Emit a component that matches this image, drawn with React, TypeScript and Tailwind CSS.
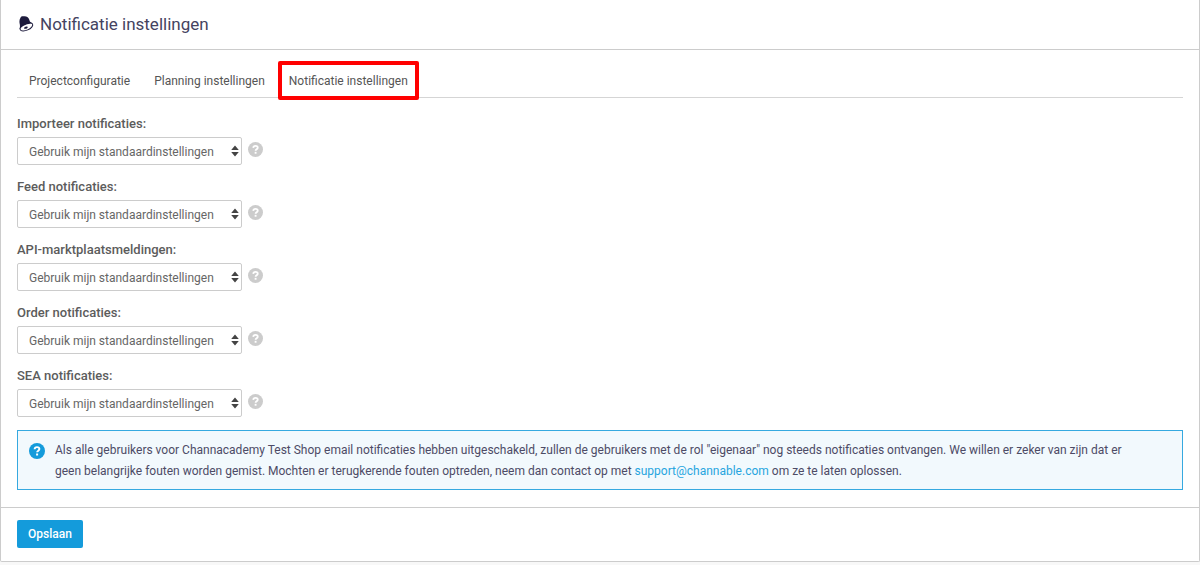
import { useState } from 'react'

const TABS = ['Projectconfiguratie', 'Planning instellingen', 'Notificatie instellingen']

const FIELDS = [
  { id: 'import', label: 'Importeer notificaties:' },
  { id: 'feed', label: 'Feed notificaties:' },
  { id: 'api', label: 'API-marktplaatsmeldingen:' },
  { id: 'order', label: 'Order notificaties:' },
  { id: 'sea', label: 'SEA notificaties:' },
]

function BellIcon() {
  return (
    <svg className="w-4 h-4" viewBox="0 0 16 16" fill="none" aria-hidden="true">
      <path
        d="M2.6 1.4C3.4.2 4.4.1 5.2.3C8.4-.3 10.8 1.4 11.4 4C11.8 5.8 12.6 6.6 14.6 7.4C10.6 7.2 4.4 9.4 1.4 13C2.2 11 2 9.8 1.8 8.2C1.2 5.8 1.2 3.4 2.6 1.4Z"
        fill="#1d1b3d"
      />
      <ellipse cx="8.4" cy="10.9" rx="6.8" ry="3.3" transform="rotate(-24 8.4 10.9)" stroke="#1d1b3d" strokeWidth="1" />
      <path d="M6 12.4C6 10.8 8.6 9.8 9.7 10.9C9.9 12.2 7.6 13.6 6 12.4Z" fill="#1d1b3d" />
    </svg>
  )
}

function QuestionIcon({ className }: { className: string }) {
  return (
    <svg className={className} viewBox="0 0 16 16" fill="none" aria-hidden="true">
      <circle cx="8" cy="8" r="8" fill="currentColor" />
      <path
        d="M5.6 6.2C5.7 4.8 6.7 4.1 8 4.1C9.4 4.1 10.4 4.9 10.4 6.1C10.4 7.6 8.1 7.8 8.1 9.3"
        stroke="white"
        strokeWidth="1.9"
      />
      <rect x="7.1" y="10.5" width="2" height="2" fill="white" />
    </svg>
  )
}

function NotificationField({ id, label }: { id: string; label: string }) {
  return (
    <div>
      <label htmlFor={id} className="block text-[13px] leading-5 font-medium text-[#5c5c5c]">
        {label}
      </label>
      <div className="flex items-center gap-1.5 mt-[3px]">
        <div className="relative">
          <select
            id={id}
            className="block h-7 w-[225px] appearance-none rounded-xs border border-[#ccc] bg-white pl-[11px] pr-4 pt-0.5 text-xs text-[#666]"
          >
            <option>Gebruik mijn standaardinstellingen</option>
          </select>
          <svg
            className="pointer-events-none absolute right-[3px] top-2 w-2 h-3"
            viewBox="0 0 8 12"
            fill="#444"
            aria-hidden="true"
          >
            <path d="M4 .5L7.8 5H.2ZM4 11.5L.2 7H7.8Z" />
          </svg>
        </div>
        <button type="button" aria-label="Uitleg" className="mb-1 text-[#ccc]">
          <QuestionIcon className="w-[15px] h-[15px]" />
        </button>
      </div>
    </div>
  )
}

export default function App() {
  const [active, setActive] = useState(2)

  return (
    <div className="bg-[#f8f8f8] pb-1 font-[Roboto,sans-serif]">
      <main className="rounded-b-xs border-x border-b border-[#ccc] bg-white">
        {/* Header */}
        <header className="flex items-center gap-1.5 border-b border-[#ccc] px-[17px] pb-0.5 h-[50px]">
          <BellIcon />
          <h1 className="text-[17px] leading-6 text-[#45435f]">Notificatie instellingen</h1>
        </header>

        <div className="px-4 pt-3 pb-[17px]">
          {/* Tabs */}
          <nav className="flex border-b border-[#d5d5d5]">
            {TABS.map((tab, i) => (
              <div key={tab} className="relative">
                <button
                  type="button"
                  onClick={() => setActive(i)}
                  className="block h-[35px] px-3 pt-0.5 text-xs text-[#555]"
                >
                  {tab}
                </button>
                {active === i && (
                  <span className="pointer-events-none absolute inset-x-px -top-px -bottom-[3px] rounded-xs border-4 border-[#ff0000]" />
                )}
              </div>
            ))}
          </nav>

          <form className="mt-4 flex flex-col gap-3">
            {FIELDS.map((field) => (
              <NotificationField key={field.id} {...field} />
            ))}
          </form>

          {/* Info message */}
          <div className="mt-[13px] flex gap-[10px] border border-[#36a9e0] bg-[#f2f9fd] px-[11px] pt-[9px] pb-[7px]">
            <QuestionIcon className="w-4 h-4 mt-[3px] shrink-0 text-[#149bdb]" />
            <p className="text-xs leading-[21px] text-[#4d4b66]">
              Als alle gebruikers voor Channacademy Test Shop email notificaties hebben uitgeschakeld, zullen de
              gebruikers met de rol "eigenaar" nog steeds notificaties ontvangen. We willen er zeker van zijn dat er
              <br />
              geen belangrijke fouten worden gemist. Mochten er terugkerende fouten optreden, neem dan contact op met{' '}
              <a href="mailto:support@channable.com" className="text-[#27a5df]">
                support@channable.com
              </a>{' '}
              om ze te laten oplossen.
            </p>
          </div>
        </div>

        <footer className="border-t border-[#ccc] px-4 pt-3 pb-[13px]">
          <button type="button" className="block h-7 rounded-xs bg-[#149bdb] px-[11px] text-xs font-medium text-white">
            Opslaan
          </button>
        </footer>
      </main>
    </div>
  )
}
